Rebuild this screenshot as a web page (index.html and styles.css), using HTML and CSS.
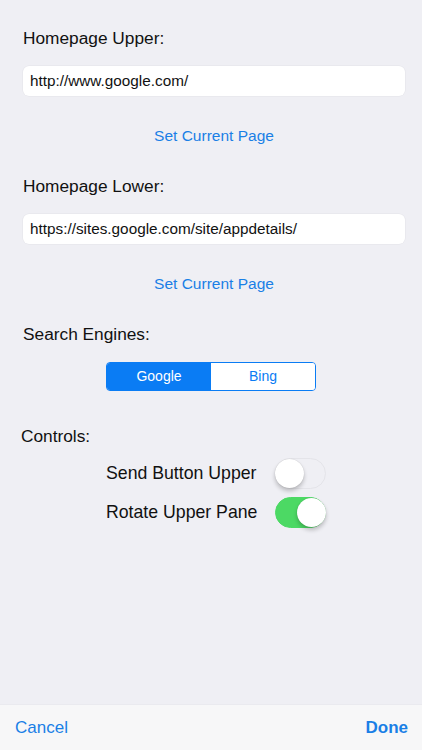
FILE: index.html
```html
<!DOCTYPE html>
<html lang="en">
  <head>
    <meta charset="UTF-8">
    <meta name="viewport" content="width=device-width, initial-scale=1.0">
    <title>Settings</title>
    <link rel="stylesheet" href="styles.css">
  </head>
  <body>
    <div class="screen">
      <div class="settings">
        <div class="section">
          <div class="section-label">Homepage Upper:</div>
          <div class="text-field">http://www.google.com/</div>
          <div class="link-button">Set Current Page</div>
        </div>

        <div class="section">
          <div class="section-label">Homepage Lower:</div>
          <div class="text-field">https://sites.google.com/site/appdetails/</div>
          <div class="link-button">Set Current Page</div>
        </div>

        <div class="section">
          <div class="section-label">Search Engines:</div>
          <div class="segmented">
            <div class="segment selected">Google</div>
            <div class="segment">Bing</div>
          </div>
        </div>

        <div class="section controls">
          <div class="section-label">Controls:</div>
          <div class="switch-row">
            <span class="switch-label">Send Button Upper</span>
            <span class="switch"><span class="knob"></span></span>
          </div>
          <div class="switch-row">
            <span class="switch-label">Rotate Upper Pane</span>
            <span class="switch on"><span class="knob"></span></span>
          </div>
        </div>
      </div>

      <div class="toolbar">
        <span class="bar-button">Cancel</span>
        <span class="bar-button done">Done</span>
      </div>
    </div>
  </body>
</html>
```

FILE: styles.css
```css
body {
  margin: 0;
  background-color: #efeff4;
  font-family: "Liberation Sans", Arial, sans-serif;
  color: #111;
}

.screen {
  height: 750px;
  display: flex;
  flex-direction: column;
}

.settings {
  flex: 1;
  padding: 28px 17px 0 23px;
}

.section {
  margin-bottom: 30px;
}

.section-label {
  font-size: 17.3px;
  line-height: 20px;
}

.text-field {
  margin-top: 18px;
  height: 30px;
  line-height: 30px;
  padding: 0 7px;
  background-color: #fff;
  border-radius: 6px;
  box-shadow: 0 0 0 0.5px #e3e3e8;
  font-size: 15.3px;
}

.link-button {
  margin-top: 30px;
  line-height: 20px;
  font-size: 15.5px;
  color: #1a7fe6;
  text-align: center;
}

.segmented {
  margin: 18px auto 0;
  width: 210px;
  height: 29px;
  display: flex;
  border: 1px solid #0a7cf4;
  border-radius: 4px;
  box-sizing: border-box;
  overflow: hidden;
  position: relative;
  left: -3px;
}

.segment {
  flex: 1;
  line-height: 27px;
  text-align: center;
  font-size: 14px;
  color: #0a7cf4;
  background-color: #fff;
}

.segment.selected {
  background-color: #0a7cf4;
  color: #fff;
}

.controls {
  margin-top: 35px;
  margin-left: -2px;
}

.controls .section-label {
  margin-bottom: 12px;
}

.switch-row {
  display: flex;
  align-items: center;
  padding-left: 85px;
  margin-bottom: 8px;
}

.switch-label {
  width: 169px;
  font-size: 17.7px;
}

.switch {
  width: 51px;
  height: 31px;
  border-radius: 16px;
  box-sizing: border-box;
  border: 1.5px solid #e4e4e9;
  background-color: #efeff4;
  display: flex;
  align-items: center;
}

.switch .knob {
  width: 29px;
  height: 29px;
  border-radius: 50%;
  background-color: #fff;
  box-shadow: 0 3px 4px rgba(0, 0, 0, 0.22), 0 0 1px rgba(0, 0, 0, 0.2);
  margin-left: -1px;
}

.switch.on {
  background-color: #4cd964;
  border-color: #4cd964;
  justify-content: flex-end;
}

.switch.on .knob {
  margin-left: 0;
  margin-right: -1px;
}

.toolbar {
  height: 45px;
  display: flex;
  align-items: center;
  justify-content: space-between;
  padding: 0 14px 0 15px;
  background-color: #f7f7f8;
  box-shadow: 0 -0.5px 0 #e6e6ea;
}

.bar-button {
  font-size: 17px;
  color: #1a7fe6;
}

.bar-button.done {
  font-weight: bold;
}
```
